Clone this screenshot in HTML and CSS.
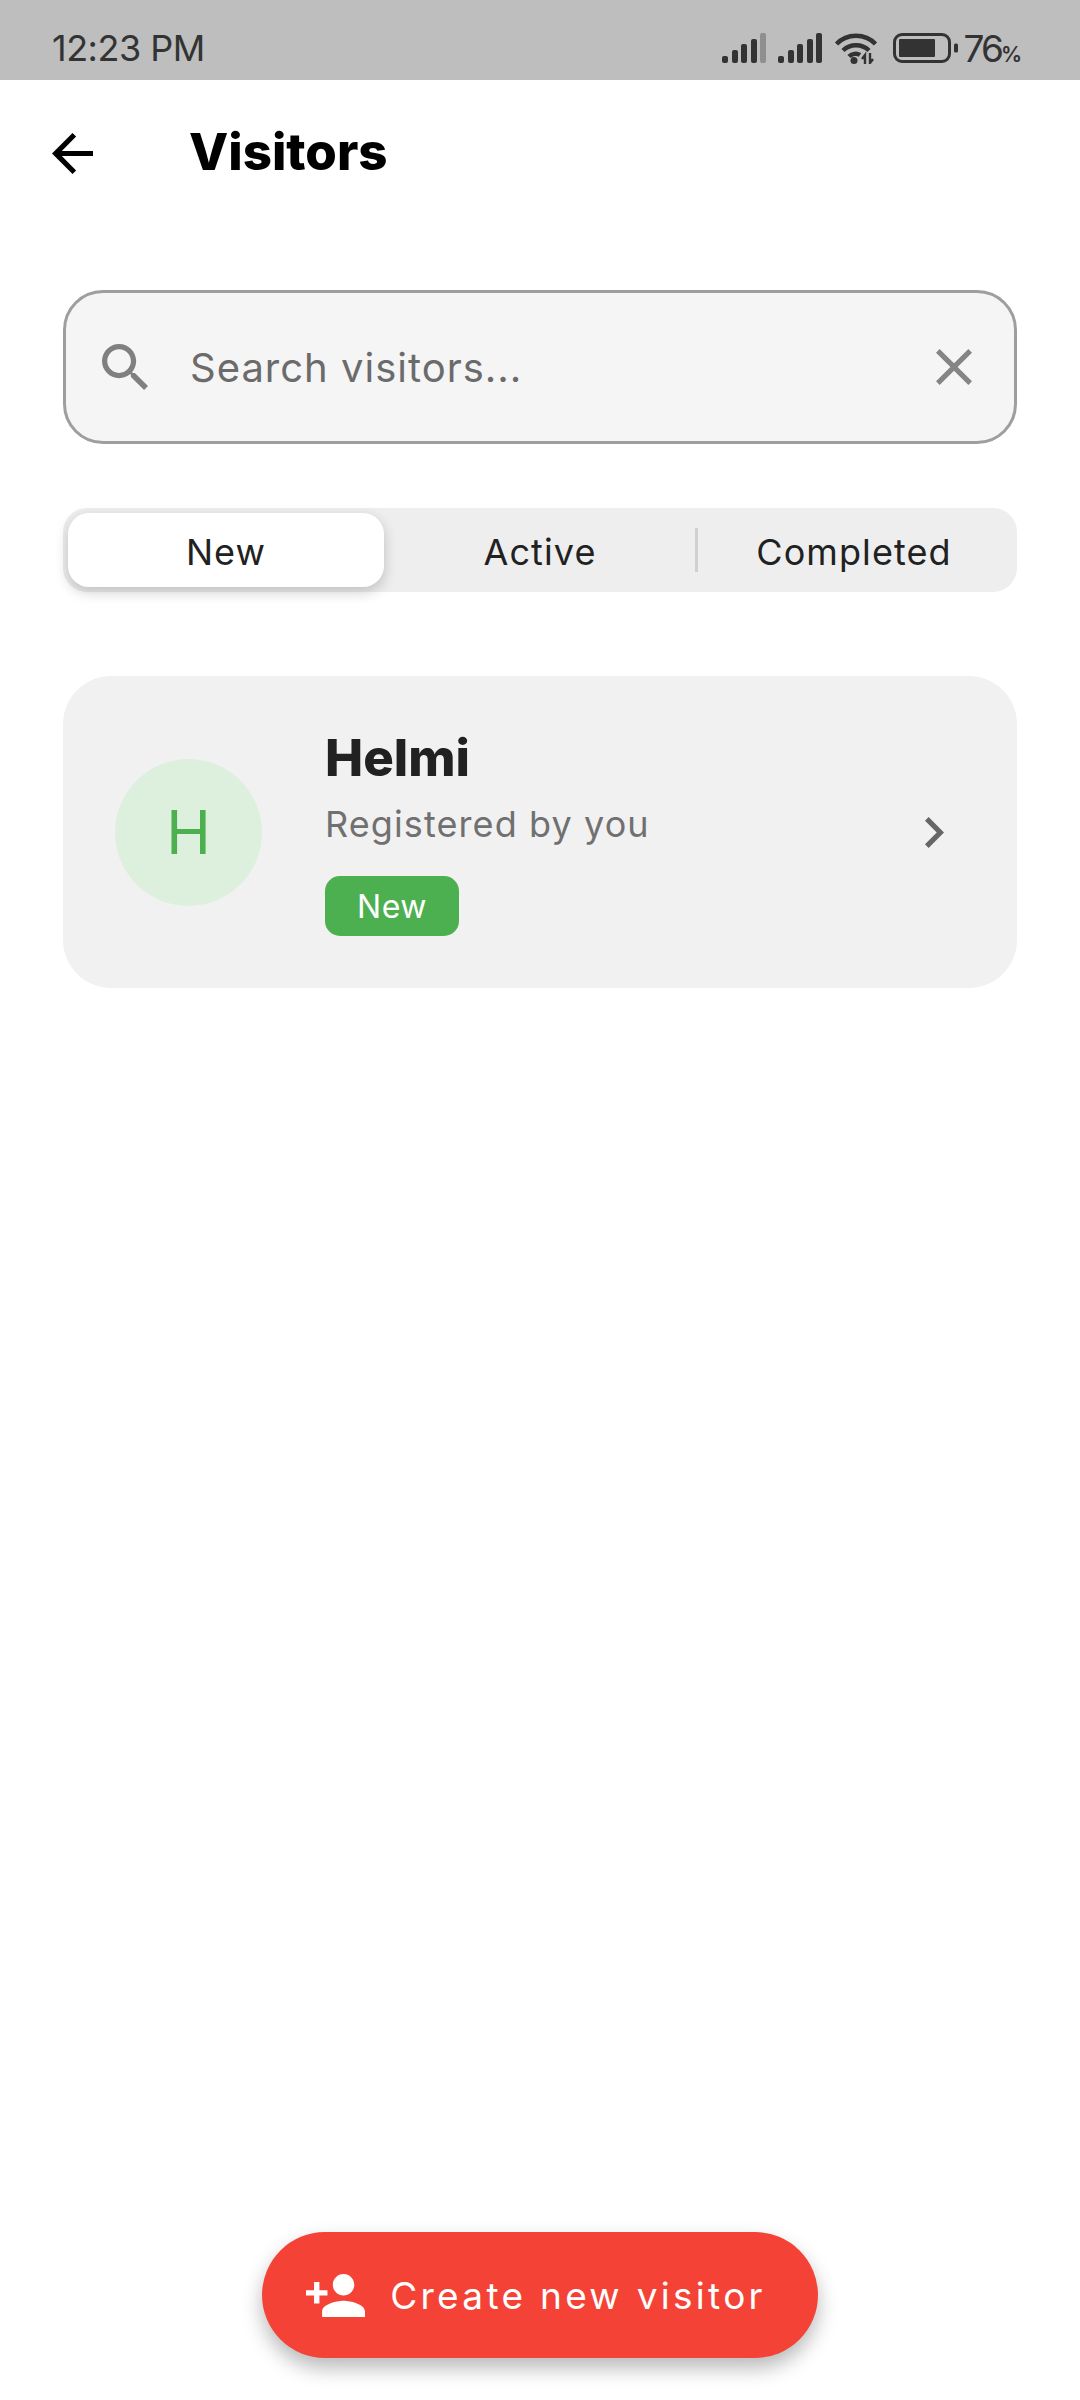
FILE: index.html
```html
<!DOCTYPE html>
<html lang="en">
<head>
<meta charset="utf-8">
<title>Visitors</title>
<link rel="stylesheet" href="styles.css">
</head>
<body>
<div class="screen">
  <div class="statusbar">
    <span class="time">12:23 PM</span>
    <div class="status-icons">
      <svg class="signal" viewBox="0 0 44 30" width="44" height="30"><rect x="0" y="23" width="6" height="7" rx="2" fill="#333"/><rect x="10" y="17" width="6" height="13" rx="2" fill="#333"/><rect x="19" y="11" width="6" height="19" rx="2" fill="#333"/><rect x="29" y="6" width="6" height="24" rx="2" fill="#333"/><rect x="38" y="0" width="6" height="30" rx="2" fill="#8f8f8f"/></svg>
      <svg class="signal" viewBox="0 0 44 30" width="44" height="30"><rect x="0" y="23" width="6" height="7" rx="2" fill="#333"/><rect x="10" y="17" width="6" height="13" rx="2" fill="#333"/><rect x="19" y="11" width="6" height="19" rx="2" fill="#333"/><rect x="29" y="6" width="6" height="24" rx="2" fill="#333"/><rect x="38" y="0" width="6" height="30" rx="2" fill="#333"/></svg>
      <svg class="wifi" viewBox="0 0 44 32" width="44" height="32"><path d="M2.500 12C13 1 31 1 41.500 12M9 18.500C16 11.500 28 11.500 35 18.500M15 24.500C18 21.500 23 21 26 23" fill="none" stroke="#333" stroke-width="4.500"/><circle cx="20" cy="28.500" r="3.500" fill="#333"/><path d="M31 32V23l-3 4M36 21v10l3-4" fill="none" stroke="#333" stroke-width="2.400"/></svg>
      <svg class="battery" viewBox="0 0 65 30" width="65" height="30"><rect x="1.500" y="1.500" width="55" height="27" rx="7.500" fill="none" stroke="#333" stroke-width="3"/><rect x="6" y="6" width="36" height="18" rx="1" fill="#333"/><rect x="61" y="10.500" width="4" height="9" rx="1.500" fill="#333"/></svg>
      <span class="level">76<small class="percent">%</small></span>
    </div>
  </div>

  <header class="appbar">
    <svg class="back" viewBox="4 4 16 16" width="41" height="41"><path d="M20 11H7.830l5.590-5.590L12 4l-8 8 8 8 1.410-1.410L7.830 13H20v-2z" fill="#000"/></svg>
    <h1 class="title">Visitors</h1>
  </header>

  <main class="content">
    <div class="search">
      <svg class="search-icon" viewBox="3 3 17.490 17.490" width="46" height="46"><path d="M15.500 14h-.79l-.28-.27C15.410 12.590 16 11.110 16 9.500 16 5.910 13.090 3 9.500 3S3 5.910 3 9.500 5.910 16 9.500 16c1.610 0 3.090-.59 4.230-1.570l.27.28v.79l5 4.990L20.490 19l-4.990-5zm-6 0C7.010 14 5 11.990 5 9.500S7.010 5 9.500 5 14 7.010 14 9.500 11.990 14 9.500 14z" fill="#808080"/></svg>
      <span class="placeholder">Search visitors...</span>
      <svg class="clear" viewBox="5 5 14 14" width="36" height="36"><path d="M19 6.410L17.590 5 12 10.590 6.410 5 5 6.410 10.590 12 5 17.590 6.410 19 12 13.410 17.590 19 19 17.590 13.410 12z" fill="#858585"/></svg>
    </div>

    <div class="tabs">
      <div class="tab tab-active">New</div>
      <div class="tab tab-middle">Active</div>
      <div class="tab-divider"></div>
      <div class="tab">Completed</div>
    </div>

    <article class="card">
      <div class="avatar">H</div>
      <div class="info">
        <div class="name">Helmi</div>
        <div class="subtitle">Registered by you</div>
        <span class="badge">New</span>
      </div>
      <svg class="chevron" viewBox="8.590 6 7.410 12" width="19" height="31"><path d="M10 6L8.590 7.410 13.170 12l-4.580 4.590L10 18l6-6z" fill="#666"/></svg>
    </article>
  </main>

  <button class="cta" type="button">
    <svg class="cta-icon" viewBox="1 4 22 16" width="59" height="43"><path d="M15 12c2.210 0 4-1.790 4-4s-1.790-4-4-4-4 1.790-4 4 1.790 4 4 4zm-9-2V7H4v3H1v2h3v3h2v-3h3v-2H6zm9 4c-2.670 0-8 1.340-8 4v2h16v-2c0-2.660-5.330-4-8-4z" fill="#fff"/></svg>
    <span class="cta-label">Create new visitor</span>
  </button>
</div>
</body>
</html>
```

FILE: styles.css
```css
* { box-sizing: border-box; }
html, body { margin: 0; padding: 0; background: #fff; }
body { font-family: Inter, "Noto Sans", sans-serif; }
.screen { width: 1080px; height: 2400px; display: flex; flex-direction: column; align-items: stretch; overflow: hidden; background: #fff; }

.statusbar { height: 80px; flex: none; background: #bebebe; display: flex; align-items: center; justify-content: space-between; padding: 16px 58px 0 52px; color: #333; }
.time { font-size: 36px; letter-spacing: -.5px; line-height: 1; }
.status-icons { display: flex; align-items: center; gap: 12px; }
.status-icons svg { display: block; }
.wifi { margin-right: 3px; }
.battery { margin-right: -6px; }
.level { font-size: 37px; letter-spacing: -3px; line-height: 1; }
.percent { font-size: 21px; letter-spacing: 0; font-weight: 600; }

.appbar { height: 146px; flex: none; display: flex; align-items: center; padding-left: 52px; gap: 96px; }
.back { display: block; }
.title { margin: 0 0 3px; font-size: 51px; font-weight: 800; color: #000; line-height: 1; }

.content { padding: 64px 63px 0; display: flex; flex-direction: column; }

.search { height: 154px; border: 3px solid #9e9e9e; border-radius: 40px; background: #f5f5f5; display: flex; align-items: center; padding: 0 42px 0 36px; }
.search-icon { flex: none; }
.placeholder { flex: 1; margin-left: 42px; font-size: 40px; letter-spacing: 1px; color: #6b6b6b; }
.clear { flex: none; }

.tabs { height: 84px; margin-top: 64px; background: #eee; border-radius: 24px; display: flex; align-items: center; padding: 5px; }
.tab { flex: 0 0 316px; height: 100%; display: flex; align-items: center; justify-content: center; padding-top: 3px; font-size: 36px; letter-spacing: 1.100px; color: #212121; }
.tab-middle { flex-basis: 312px; }
.tab-active { background: #fff; border-radius: 21px; box-shadow: 0 5px 14px rgba(0,0,0,.2); }
.tab-divider { width: 3px; height: 44px; background: #d0d0d0; flex: none; margin: 0 -1.500px; }

.card { height: 312px; margin-top: 84px; background: #f1f1f1; border-radius: 48px; display: flex; align-items: center; padding: 0 73px 0 52px; }
.avatar { width: 147px; height: 147px; border-radius: 50%; background: #ddf0de; color: #4caf50; display: flex; align-items: center; justify-content: center; font-size: 60px; font-weight: 400; flex: none; }
.info { flex: 1; margin-left: 63px; display: flex; flex-direction: column; align-items: flex-start; }
.name { font-size: 51px; font-weight: 800; color: #212121; line-height: 60px; }
.subtitle { font-size: 36px; letter-spacing: 1.100px; color: #707070; line-height: 44px; margin-top: 14px; }
.badge { margin-top: 30px; height: 60px; width: 134px; background: #4caf50; border-radius: 15px; color: #fff; font-size: 32px; letter-spacing: .5px; display: flex; align-items: center; justify-content: center; }

.cta { margin: auto auto 42px; width: 556px; height: 126px; border: 0; border-radius: 63px; background: #f44336; color: #fff; display: flex; align-items: center; justify-content: center; gap: 25px; font-family: inherit; font-size: 37px; letter-spacing: 3.300px; box-shadow: 0 10px 20px rgba(0,0,0,.28); padding: 0 8px 0 0; }
```
